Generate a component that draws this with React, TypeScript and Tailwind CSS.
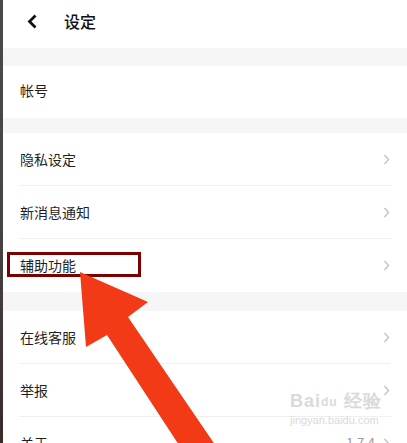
const groups: { label: string; value?: string }[][] = [
  [{ label: "隐私设定" }, { label: "新消息通知" }, { label: "辅助功能" }],
  [{ label: "在线客服" }, { label: "举报" }, { label: "关于", value: "1.7.4" }],
];

function Chevron() {
  return (
    <svg width="7" height="11" viewBox="0 0 7 11" className="shrink-0">
      <polyline points="1.5,1 5.5,5.5 1.5,10" fill="none" stroke="#c4c4c4" strokeWidth="1.4" />
    </svg>
  );
}

function Row({ label, value, last }: { label: string; value?: string; last?: boolean }) {
  return (
    <div className="px-4 bg-white">
      <div
        className={`h-[53px] flex items-center justify-between pl-[1px] pr-[1px] ${
          last ? "" : "border-b border-[#efefef]"
        }`}
      >
        <span className="text-[14px] text-[#1f1f1f]">{label}</span>
        <div className="flex items-center gap-2">
          {value && <span className="text-[13px] text-[#9a9a9a]">{value}</span>}
          <Chevron />
        </div>
      </div>
    </div>
  );
}

export default function App() {
  return (
    <div
      className="relative w-[407px] h-[443px] overflow-hidden flex bg-white"
      style={{ fontFamily: "'Noto Sans CJK SC', 'Noto Sans', sans-serif" }}
    >
      {/* dark edge of the phone frame */}
      <div className="w-[3px] shrink-0 bg-gradient-to-b from-[#4a4a4a] via-[#454545] to-[#3a2a2a]" />

      <div className="flex-1 flex flex-col">
        <div className="h-[48px] shrink-0 flex items-center pl-[24px] pb-[6px] gap-[26px] bg-white">
          <svg width="11" height="15" viewBox="0 0 11 15">
            <polyline points="8.5,1.5 2.5,7.5 8.5,13.5" fill="none" stroke="#111" strokeWidth="2.8" />
          </svg>
          <span className="text-[16px] font-medium text-[#111]">设定</span>
        </div>

        <div className="h-[18px] shrink-0 bg-[#f6f6f6]" />
        <div className="h-[52px] shrink-0 px-4 pb-[3px] flex items-center bg-white">
          <span className="text-[14px] text-[#1f1f1f] pl-[1px]">帐号</span>
        </div>
        <div className="h-[15px] shrink-0 bg-[#f6f6f6]" />

        {groups.map((g, gi) => (
          <div key={gi} className="flex flex-col shrink-0">
            {g.map((r, i) => (
              <Row key={r.label} label={r.label} value={r.value} last={i === g.length - 1 && gi === 0} />
            ))}
            {gi === 0 && <div className="h-[19px] bg-[#f6f6f6]" />}
          </div>
        ))}
      </div>

      {/* annotation: highlight box */}
      <div className="absolute left-[7px] top-[252px] w-[134px] h-[25px] border-[3px] border-[#7d0000]" />

      {/* annotation: arrow */}
      <svg className="absolute left-0 top-0 pointer-events-none" width="407" height="443" viewBox="0 0 407 443">
        <polygon
          points="80,272 148,302 128,317 222,455 194,468 107,335 86,347"
          fill="#f23a16"
        />
      </svg>

      {/* watermark */}
      <div className="absolute left-[290px] top-[392px] flex flex-col items-start text-[#dadada] leading-none pointer-events-none">
        <span className="text-[18px] font-bold tracking-[1px]" style={{ fontFamily: "'Liberation Sans', sans-serif" }}>
          Bai<span className="text-[12px] align-middle">du</span> 经验
        </span>
        <span className="text-[11px] mt-[5px]" style={{ fontFamily: "'Liberation Sans', sans-serif" }}>
          jingyan.baidu.com
        </span>
      </div>
    </div>
  );
}
